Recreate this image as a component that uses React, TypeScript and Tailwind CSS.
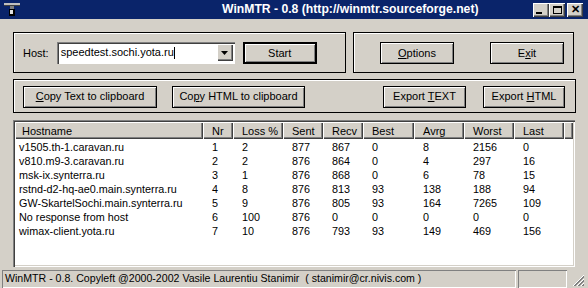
import React from 'react';

const cols = [
  { label: 'Hostname', w: 188 },
  { label: 'Nr', w: 30 },
  { label: 'Loss %', w: 50 },
  { label: 'Sent', w: 40 },
  { label: 'Recv', w: 40 },
  { label: 'Best', w: 51 },
  { label: 'Avrg', w: 50 },
  { label: 'Worst', w: 50 },
  { label: 'Last', w: 50 },
];

const rows = [
  ['v1505.th-1.caravan.ru', '1', '2', '877', '867', '0', '8', '2156', '0'],
  ['v810.m9-3.caravan.ru', '2', '2', '876', '864', '0', '4', '297', '16'],
  ['msk-ix.synterra.ru', '3', '1', '876', '868', '0', '6', '78', '15'],
  ['rstnd-d2-hq-ae0.main.synterra.ru', '4', '8', '876', '813', '93', '138', '188', '94'],
  ['GW-SkartelSochi.main.synterra.ru', '5', '9', '876', '805', '93', '164', '7265', '109'],
  ['No response from host', '6', '100', '876', '0', '0', '0', '0', '0'],
  ['wimax-client.yota.ru', '7', '10', '876', '793', '93', '149', '469', '156'],
];

const btn =
  'flex items-center justify-center h-[22px] bg-[#d4d0c8] border border-black shadow-[inset_1px_1px_0_#fff,inset_-1px_-1px_0_#808080] text-[11px] text-black';

const Btn = ({ w, children, def }: { w: string; children: React.ReactNode; def?: boolean }) => (
  <div className={`${btn} ${w} ${def ? 'border-2' : ''}`}>{children}</div>
);

const Group = ({ className, children }: { className: string; children: React.ReactNode }) => (
  <div className={`border border-black shadow-[inset_1px_1px_0_#fff] flex items-center ${className}`}>{children}</div>
);

const CapBtn = ({ children }: { children: React.ReactNode }) => (
  <div className="w-4 h-[14px] bg-[#d4d0c8] flex items-center justify-center shadow-[inset_1px_1px_0_#fff,inset_-1px_-1px_0_#404040,inset_-2px_-2px_0_#808080]">
    {children}
  </div>
);

export default function App() {
  return (
    <div className="w-[588px] h-[288px] overflow-hidden bg-[#d4d0c8] text-black font-['Liberation_Sans',Arial,sans-serif] flex flex-col">
      {/* title bar */}
      <div className="h-[19px] bg-[#0a246a] flex items-center pl-1 pr-[5px] shrink-0">
        <svg width="16" height="14" viewBox="0 0 16 14">
          <rect x="0" y="0" width="16" height="3" fill="#c0c0c0" />
          <rect x="0" y="2" width="16" height="1" fill="#404040" />
          <rect x="6" y="3" width="4" height="3" fill="#808080" />
          <rect x="5" y="6" width="6" height="7" fill="#000" />
          <rect x="6" y="7" width="3" height="4" fill="#e0e0e0" />
        </svg>
        <div className="ml-[202px] text-white font-bold text-[12.2px] leading-none whitespace-nowrap">
          WinMTR - 0.8 (http://winmtr.sourceforge.net)
        </div>
        <div className="ml-auto flex items-center">
          <CapBtn>
            <div className="w-[6px] h-[2px] bg-black mt-[6px] -ml-1" />
          </CapBtn>
          <CapBtn>
            <div className="w-[9px] h-[8px] border border-black border-t-2" />
          </CapBtn>
          <div className="w-[2px]" />
          <CapBtn>
            <span className="text-[11px] font-bold leading-none -mt-px">✕</span>
          </CapBtn>
        </div>
      </div>

      {/* top groups */}
      <div className="flex gap-[7px] ml-[13px] mt-[13px] h-[41px]">
        <Group className="w-[333px] pl-[9px] pt-px">
          <span className="text-[11px]">Host:</span>
          <div className="ml-[8px] w-[178px] h-[22px] bg-white flex items-center shadow-[inset_1px_1px_0_#808080,inset_2px_2px_0_#404040,inset_-1px_-1px_0_#fff]">
            <span className="pl-1 text-[11px] leading-none">speedtest.sochi.yota.ru</span>
            <span className="w-px h-[12px] bg-black" />
            <div className="ml-auto mr-[2px] w-4 h-[17px] bg-[#d4d0c8] flex items-center justify-center shadow-[inset_1px_1px_0_#fff,inset_-1px_-1px_0_#404040,inset_-2px_-2px_0_#808080]">
              <svg width="7" height="4" viewBox="0 0 7 4">
                <path d="M0 0h7L3.5 4z" fill="#000" />
              </svg>
            </div>
          </div>
          <div className="ml-[8px]">
            <Btn w="w-[74px]" def>
              Start
            </Btn>
          </div>
        </Group>
        <Group className="w-[221px] pl-[26px] gap-[36px] pt-px">
          <Btn w="w-[74px]">
            <span>
              <u>O</u>ptions
            </span>
          </Btn>
          <Btn w="w-[74px]">
            <span>
              E<u>x</u>it
            </span>
          </Btn>
        </Group>
      </div>

      {/* export group */}
      <Group className="ml-[13px] mt-[6px] w-[563px] h-[35px] pl-[9px] pr-[10px] pt-px">
        <Btn w="w-[134px]">
          <span>
            <u>C</u>opy Text to clipboard
          </span>
        </Btn>
        <div className="ml-[15px]">
          <Btn w="w-[133px]">
            <span>
              Co<u>p</u>y HTML to clipboard
            </span>
          </Btn>
        </div>
        <div className="ml-auto flex gap-[17px]">
          <Btn w="w-[83px]">
            <span>
              Export <u>T</u>EXT
            </span>
          </Btn>
          <Btn w="w-[82px]">
            <span>
              Export <u>H</u>TML
            </span>
          </Btn>
        </div>
      </Group>

      {/* list view */}
      <div className="ml-[13px] mt-[7px] w-[562px] h-[148px] bg-white p-[2px] shadow-[inset_1px_1px_0_#808080,inset_2px_2px_0_#404040,inset_-1px_-1px_0_#fff,inset_-2px_-2px_0_#d4d0c8] flex flex-col">
        <div className="flex h-[17px] shrink-0 text-[11px]">
          {cols.map((c, i) => (
            <div
              key={c.label}
              style={{ width: c.w }}
              className={`h-full bg-[#d4d0c8] flex items-center ${i === 0 ? 'pl-[7px]' : 'pl-[9px]'} shadow-[inset_1px_1px_0_#fff,inset_-1px_-1px_0_#404040,inset_-2px_-2px_0_#808080]`}
            >
              {c.label}
            </div>
          ))}
          <div className="flex-1 h-full bg-[#d4d0c8] shadow-[inset_1px_1px_0_#fff,inset_-1px_-1px_0_#404040,inset_-2px_-2px_0_#808080]" />
        </div>
        <div className="text-[10.8px] pt-px">
          {rows.map((r, ri) => (
            <div key={ri} className="flex h-[14px] items-center">
              {r.map((v, ci) => (
                <div
                  key={ci}
                  style={{ width: cols[ci].w }}
                  className={`whitespace-nowrap ${ci === 0 ? 'pl-[4px]' : 'pl-[9px]'}`}
                >
                  {v}
                </div>
              ))}
            </div>
          ))}
        </div>
      </div>

      {/* status bar */}
      <div className="mt-[3px] flex items-stretch h-[18px] px-[2px] gap-[2px]">
        <div className="w-[514px] flex items-center pl-[3px] text-[10.6px] whitespace-pre shadow-[inset_1px_1px_0_#808080,inset_-1px_-1px_0_#fff]">
          WinMTR - 0.8. Copyleft @2000-2002 Vasile Laurentiu Stanimir  ( stanimir@cr.nivis.com )
        </div>
        <div className="w-[49px] shadow-[inset_1px_1px_0_#808080,inset_-1px_-1px_0_#fff]" />
        <div className="flex-1 flex items-end justify-end pb-[1px] pr-[1px]">
          <svg width="13" height="13" viewBox="0 0 13 13">
            <path d="M12 1L1 12M12 5L5 12M12 9L9 12" stroke="#fff" strokeWidth="1" />
            <path d="M12 2L2 12M12 3L3 12M12 6L6 12M12 7L7 12M12 10L10 12M12 11L11 12" stroke="#808080" strokeWidth="1" />
          </svg>
        </div>
      </div>
    </div>
  );
}
